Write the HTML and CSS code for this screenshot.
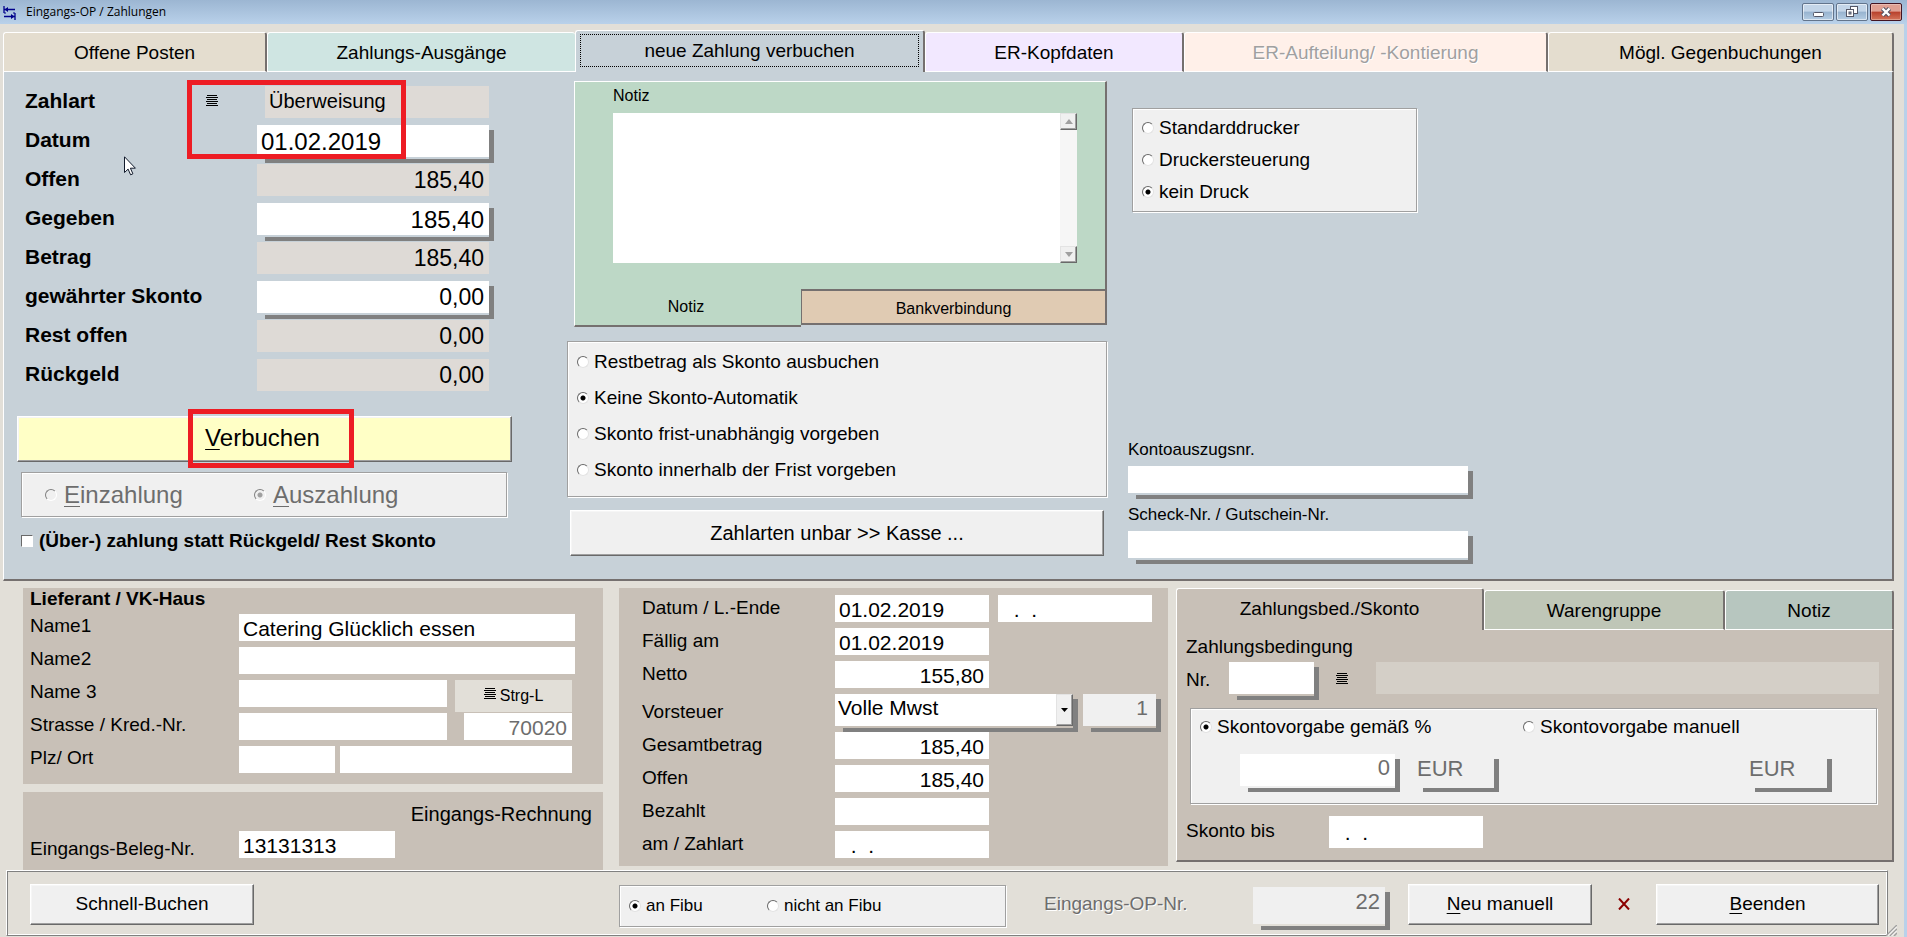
FILE: index.html
```html
<!DOCTYPE html>
<html lang="de">
<head>
<meta charset="utf-8">
<title>Eingangs-OP / Zahlungen</title>
<link rel="stylesheet" href="styles.css">
</head>
<body>
<header class="titlebar">
  <svg class="app-icon" viewBox="0 0 13 15" width="13" height="15" aria-hidden="true">
    <path d="M1 1v7M1.500 4.500h10.500M12 8v7M1 11.500h10.500" fill="none" stroke="#00008b" stroke-width="1.300"/>
    <path d="M1.500 4.500L5 2v5zM11.500 11.500L8 9v5z" fill="#00008b"/>
    <path d="M1 8h2M10 8h2" stroke="#00008b"/>
  </svg>
  <h1 class="titlebar-text">Eingangs-OP / Zahlungen</h1>
  <div class="window-buttons">
    <button class="winbtn" aria-label="Minimieren"><svg viewBox="0 0 30 16" width="30" height="16"><rect x="10.500" y="8.500" width="10" height="4" rx="1" fill="#fff" stroke="#535666"/></svg></button>
    <button class="winbtn" aria-label="Wiederherstellen"><svg viewBox="0 0 30 16" width="30" height="16"><g fill="#fff" stroke="#535666"><rect x="13.500" y="2.500" width="7" height="7"/><rect x="9.500" y="5.500" width="7" height="7"/><rect x="12" y="8" width="2" height="2" fill="#9fbbd6"/></g></svg></button>
    <button class="winbtn winbtn-close" aria-label="Schließen"><svg viewBox="0 0 30 16" width="30" height="16"><path d="M11.500 4.500l7 7M18.500 4.500l-7 7" stroke="#535666" stroke-width="4.500"/><path d="M11.500 4.500l7 7M18.500 4.500l-7 7" stroke="#fff" stroke-width="2.400"/></svg></button>
  </div>
</header>

<main class="window">
  <nav class="tabs main-tabs">
    <button class="tab tab-sand">Offene Posten</button>
    <button class="tab tab-mint">Zahlungs-Ausgänge</button>
    <button class="tab tab-active"><span class="focus-box">neue Zahlung verbuchen</span></button>
    <button class="tab tab-lilac">ER-Kopfdaten</button>
    <button class="tab tab-peach" disabled>ER-Aufteilung/ -Kontierung</button>
    <button class="tab tab-sand tab-last">Mögl. Gegenbuchungen</button>
  </nav>

  <section class="page">
    <div class="col-pay">
      <div class="pay-rows">
        <div class="pay-row">
          <div class="pay-label"><label for="zahlart">Zahlart</label>
            <button class="list-btn" aria-label="Zahlart wählen"><svg class="list-icon" viewBox="0 0 12 12" width="12" height="12" shape-rendering="crispEdges"><path d="M1 .5h10M0 2.500h12M1 4.500h10M0 6.500h12M1 8.500h10M0 10.500h12" stroke="#000"/></svg></button>
          </div>
          <div class="plain indent"><input id="zahlart" class="field tall grey" value="Überweisung" readonly></div>
        </div>
        <div class="pay-row"><label for="datum">Datum</label><div class="drop"><input id="datum" class="field tall big" value="01.02.2019"></div></div>
        <div class="pay-row"><label for="offen">Offen</label><div class="plain"><input id="offen" class="field tall grey num" value="185,40" readonly></div></div>
        <div class="pay-row"><label for="gegeben">Gegeben</label><div class="drop"><input id="gegeben" class="field tall big num" value="185,40"></div></div>
        <div class="pay-row"><label for="betrag">Betrag</label><div class="plain"><input id="betrag" class="field tall grey num" value="185,40" readonly></div></div>
        <div class="pay-row"><label for="skonto">gewährter Skonto</label><div class="drop"><input id="skonto" class="field tall num" value="0,00"></div></div>
        <div class="pay-row"><label for="rest">Rest offen</label><div class="plain"><input id="rest" class="field tall grey num" value="0,00" readonly></div></div>
        <div class="pay-row"><label for="rueck">Rückgeld</label><div class="plain"><input id="rueck" class="field tall grey num" value="0,00" readonly></div></div>
      </div>
      <button class="btn btn-book"><u>V</u>erbuchen</button>
      <div class="group direction" role="radiogroup" aria-label="Richtung">
        <label class="choice"><input type="radio" name="richtung" disabled><span><u>E</u>inzahlung</span></label>
        <label class="choice"><input type="radio" name="richtung" checked disabled><span><u>A</u>uszahlung</span></label>
      </div>
      <label class="check"><input type="checkbox"><span>(Über-) zahlung statt Rückgeld/ Rest Skonto</span></label>
      <div class="mark mark-type"></div>
      <div class="mark mark-book"></div>
      <svg class="pointer" viewBox="0 0 13 20" width="13" height="20" aria-hidden="true"><path d="M.5.8v15.700l3.600-3.400 2.500 5.700 2.300-1-2.500-5.600h5z" fill="#fff" stroke="#111a2b"/></svg>
    </div>

    <div class="col-mid">
      <div class="note">
        <div class="note-body">
          <label class="small" for="notiz">Notiz</label>
          <div class="note-edit">
            <textarea id="notiz"></textarea>
            <div class="scroll">
              <button aria-label="Nach oben"><svg viewBox="0 0 8 5" width="8" height="5"><path d="M0 5l4-5 4 5z" fill="#a0a0a0"/></svg></button>
              <button aria-label="Nach unten"><svg viewBox="0 0 8 5" width="8" height="5"><path d="M0 0l4 5 4-5z" fill="#a0a0a0"/></svg></button>
            </div>
          </div>
        </div>
        <div class="note-tabs">
          <button class="note-tab note-tab-active">Notiz</button>
          <button class="note-tab note-tab-bank">Bankverbindung</button>
        </div>
      </div>
      <div class="group skonto-mode" role="radiogroup" aria-label="Skonto">
        <label class="choice"><input type="radio" name="skontomodus"><span>Restbetrag als Skonto ausbuchen</span></label>
        <label class="choice"><input type="radio" name="skontomodus" checked><span>Keine Skonto-Automatik</span></label>
        <label class="choice"><input type="radio" name="skontomodus"><span>Skonto frist-unabhängig vorgeben</span></label>
        <label class="choice"><input type="radio" name="skontomodus"><span>Skonto innerhalb der Frist vorgeben</span></label>
      </div>
      <button class="btn btn-cash">Zahlarten unbar &gt;&gt; Kasse ...</button>
    </div>

    <div class="col-print">
      <div class="group printer" role="radiogroup" aria-label="Drucker">
        <label class="choice"><input type="radio" name="drucker"><span>Standarddrucker</span></label>
        <label class="choice"><input type="radio" name="drucker"><span>Druckersteuerung</span></label>
        <label class="choice"><input type="radio" name="drucker" checked><span>kein Druck</span></label>
      </div>
      <div class="refs">
        <label for="konto">Kontoauszugsnr.</label>
        <div class="drop"><input id="konto" class="field"></div>
        <label for="scheck">Scheck-Nr. / Gutschein-Nr.</label>
        <div class="drop"><input id="scheck" class="field"></div>
      </div>
    </div>
  </section>

  <section class="details">
    <div class="col-supplier">
      <div class="card supplier">
        <h2>Lieferant / VK-Haus</h2>
        <div class="form-row"><label for="name1">Name1</label><input id="name1" class="field" value="Catering Glücklich essen"></div>
        <div class="form-row"><label for="name2">Name2</label><input id="name2" class="field"></div>
        <div class="form-row"><label for="name3">Name 3</label>
          <div class="split split-list"><input id="name3" class="field">
            <button class="short-btn"><svg class="list-icon" viewBox="0 0 12 12" width="12" height="12" shape-rendering="crispEdges" aria-hidden="true"><path d="M1 .5h10M0 2.500h12M1 4.500h10M0 6.500h12M1 8.500h10M0 10.500h12" stroke="#000"/></svg>Strg-L</button></div></div>
        <div class="form-row"><label for="strasse">Strasse / Kred.-Nr.</label>
          <div class="split split-street"><input id="strasse" class="field"><input class="field num" aria-label="Kreditor-Nr." value="70020" disabled></div></div>
        <div class="form-row"><label for="plz">Plz/ Ort</label>
          <div class="split split-city"><input id="plz" class="field"><input class="field" aria-label="Ort"></div></div>
      </div>
      <div class="card receipt">
        <p class="doc-type">Eingangs-Rechnung</p>
        <div class="form-row"><label for="beleg">Eingangs-Beleg-Nr.</label><div class="split split-receipt"><input id="beleg" class="field" value="13131313"></div></div>
      </div>
    </div>

    <div class="card invoice">
      <div class="inv-row"><label for="idatum">Datum / L.-Ende</label><div class="halves"><input id="idatum" class="field" value="01.02.2019"><input class="field" aria-label="L.-Ende" value="  .  ."></div></div>
      <div class="inv-row"><label for="faellig">Fällig am</label><div class="halves"><input id="faellig" class="field" value="01.02.2019"></div></div>
      <div class="inv-row"><label for="netto">Netto</label><div class="halves"><input id="netto" class="field num" value="155,80"></div></div>
      <div class="inv-row inv-row-tax"><label for="vorsteuer">Vorsteuer</label>
        <div class="tax">
          <div class="drop"><div class="combo"><select id="vorsteuer" class="field tall"><option>Volle Mwst</option></select><span class="combo-arrow"><svg viewBox="0 0 7 4" width="7" height="4"><path d="M0 0h7L3.500 4z"/></svg></span></div></div>
          <div class="drop"><input class="field tall num pale" aria-label="Steuerschlüssel" value="1" disabled></div>
        </div></div>
      <div class="inv-row"><label for="gesamt">Gesamtbetrag</label><div class="halves"><input id="gesamt" class="field num" value="185,40"></div></div>
      <div class="inv-row"><label for="ioffen">Offen</label><div class="halves"><input id="ioffen" class="field num" value="185,40"></div></div>
      <div class="inv-row"><label for="bezahlt">Bezahlt</label><div class="halves"><input id="bezahlt" class="field"></div></div>
      <div class="inv-row"><label for="am">am / Zahlart</label><div class="halves"><input id="am" class="field" value="  .  ."></div></div>
    </div>

    <div class="terms">
      <nav class="tabs terms-tabs">
        <button class="tab tab-active">Zahlungsbed./Skonto</button>
        <button class="tab tab-sage">Warengruppe</button>
        <button class="tab tab-teal tab-last">Notiz</button>
      </nav>
      <div class="terms-body">
        <h3>Zahlungsbedingung</h3>
        <div class="terms-nr">
          <label for="zbnr">Nr.</label>
          <div class="drop"><input id="zbnr" class="field tall"></div>
          <button class="list-btn" aria-label="Zahlungsbedingung wählen"><svg class="list-icon" viewBox="0 0 12 12" width="12" height="12" shape-rendering="crispEdges"><path d="M1 .5h10M0 2.500h12M1 4.500h10M0 6.500h12M1 8.500h10M0 10.500h12" stroke="#000"/></svg></button>
          <input class="field tall stone" aria-label="Bezeichnung" readonly>
        </div>
        <div class="group discount" role="radiogroup" aria-label="Skontovorgabe">
          <label class="choice"><input type="radio" name="vorgabe" checked><span>Skontovorgabe gemäß %</span></label>
          <label class="choice"><input type="radio" name="vorgabe"><span>Skontovorgabe manuell</span></label>
          <div class="percent"><div class="drop"><input class="field tall num" aria-label="Skonto" value="0" disabled></div><div class="drop unit">EUR</div></div>
          <div class="manual"><div class="drop unit">EUR</div></div>
        </div>
        <div class="until"><label for="bis">Skonto bis</label><input id="bis" class="field tall" value="  .  ."></div>
      </div>
    </div>
  </section>

  <footer class="actions">
    <button class="btn act-quick">Schnell-Buchen</button>
    <div class="group fibu" role="radiogroup" aria-label="Fibu">
      <label class="choice"><input type="radio" name="fibu" checked><span>an Fibu</span></label>
      <label class="choice"><input type="radio" name="fibu"><span>nicht an Fibu</span></label>
    </div>
    <label class="op-label" for="opnr">Eingangs-OP-Nr.</label>
    <div class="drop op-field"><input id="opnr" class="field num pale" value="22" disabled></div>
    <button class="btn act-new"><u>N</u>eu manuell</button>
    <button class="cancel" aria-label="Abbrechen"><svg viewBox="0 0 12 12" width="12" height="12"><path d="M1 .5l10 11M11 .5L1 11.500" stroke="#8b0000" stroke-width="2"/></svg></button>
    <button class="btn act-end"><u>B</u>eenden</button>
  </footer>
  <svg class="grip" viewBox="0 0 11 11" width="11" height="11" aria-hidden="true"><path d="M0 11L11 0M4 11l7-7M8 11l3-3" stroke="#a0a0a0" stroke-width="1.500"/><path d="M1.500 11L11 1.500M5.500 11L11 5.500" stroke="#fff"/></svg>
</main>
</body>
</html>
```

FILE: styles.css
```css
* { box-sizing: border-box; }

body {
  margin: 0;
  min-height: 100vh;
  display: flex;
  flex-direction: column;
  background: #e2dfd8;
  color: #000;
  font: 19px/22px "Liberation Sans", Arial, sans-serif;
}

h1, h2, h3, p { margin: 0; font-size: inherit; font-weight: normal; }
h2 { font-weight: bold; }

button, input, select, textarea { font: inherit; color: inherit; margin: 0; border-radius: 0; }
button { padding: 0; border: 0; background: none; }
svg { display: block; }
u { text-decoration-thickness: 1px; text-underline-offset: 3px; }

/* Title bar */
.titlebar {
  height: 24px;
  flex: none;
  display: flex;
  align-items: center;
  padding: 0 5px 0 3px;
  background: linear-gradient(#9cb6d2, #b9d1ea);
}
.titlebar-text { margin-left: 10px; font: 12px/16px "Open Sans", "Noto Sans", sans-serif; }
.window-buttons { display: flex; gap: 2px; margin-left: auto; }
.winbtn {
  width: 32px;
  height: 18px;
  border: 1px solid #62748c;
  border-radius: 2px;
  background: linear-gradient(#c3d5e8 45%, #97b3cf 50%, #b5cde4);
  box-shadow: inset 0 0 0 1px rgba(255, 255, 255, .55);
}
.winbtn-close { border-color: #431422; background: linear-gradient(#e0a093 45%, #b8402c 50%, #d4745a); box-shadow: inset 0 0 0 1px rgba(255, 255, 255, .3); }

/* Window frame */
.window {
  position: relative;
  flex: 1;
  padding: 6px 10px 2px 3px;
  border-right: 3px solid #b9d1ea;
}

/* Tabs */
.tabs { display: grid; align-items: end; }
.main-tabs { grid-template-columns: 264fr 308fr 350fr 259fr 364fr 346fr; }
.terms-tabs { grid-template-columns: 308fr 241fr 169fr; }
.tab {
  height: 40px;
  padding-top: 2px;
  border: 1px solid #fff;
  border-right: 2px solid #75706f;
  border-radius: 3px 3px 0 0;
  text-align: center;
}
.tab:disabled { color: #a0a0a0; text-shadow: 1px 1px #fff; }
.tab-sand { background: #e4ddcf; }
.tab-mint { background: #cfe5e2; border-right: 0; }
.tab-lilac { background: #f2e8ff; }
.tab-peach { background: #fff0e9; }
.tab-sage { background: #bfc6b7; }
.tab-teal { background: #b7c6bf; }
.main-tabs .tab-active { height: 42px; padding: 3px 4px 5px; border-bottom: 0; background: #c7d1d8; }
.terms-tabs .tab-active { height: 42px; padding-bottom: 4px; border-bottom: 0; background: #c8c0b7; }
.focus-box { display: grid; place-items: center; height: 100%; border: 1px dotted #000; }

/* Main page */
.page {
  display: grid;
  grid-template-columns: 563fr 541fr 784fr;
  background: #c7d1d8;
  border: solid;
  border-width: 0 2px 2px 1px;
  border-color: #75706f #75706f #75706f #fff;
}
.col-pay { position: relative; display: flex; flex-direction: column; padding: 14px 55px 0 13px; }
.pay-rows { display: grid; gap: 7px; margin: 0 18px 25px 8px; font-size: 21px; }
.pay-row { display: grid; grid-template-columns: 232fr 237fr; align-items: start; height: 32px; line-height: 30px; font-weight: bold; }
.pay-label { display: flex; align-items: center; justify-content: space-between; padding-right: 39px; }
.list-btn { display: grid; place-items: center start; }

/* Fields */
.field {
  display: block;
  width: 100%;
  min-width: 0;
  height: 27px;
  padding: 2px 4px 0;
  border: 0;
  background: #fff;
  font-size: 21px;
}
.field:disabled { color: #6d6d6d; }
.tall { height: 32px; }
.num { padding-right: 5px; text-align: right; }
.grey { background: #dedad6; }
.pale { background: #f0f0f0; }
.stone { background: #d4cfc7; }
.pay-row .field { font-size: 23px; font-weight: normal; padding-top: 1px; }
.pay-row .indent .field { padding-bottom: 3px; font-size: 20px; }
.pay-row .big { font-size: 24px; }
.plain { padding-right: 5px; }
.indent { padding-left: 8px; }
.drop {
  padding: 0 5px 6px 0;
  background:
    linear-gradient(#808080, #808080) right bottom / calc(100% - 8px) 4px no-repeat,
    linear-gradient(#808080, #808080) right bottom / 5px calc(100% - 5px) no-repeat;
}

/* Buttons and groups */
.btn {
  height: 46px;
  border: 1px solid;
  border-color: #fff #696969 #696969 #fff;
  background: #f0f0f0;
  box-shadow: inset -1px -1px #a0a0a0, inset 1px 1px #f6f6f6;
}
.btn-book { background: #ffffc6; font-size: 24px; padding: 0 4px 3px 0; }
.group { background: #f0f0f0; border: 1px solid #a0a0a0; box-shadow: inset 1px 1px #fff, 1px 1px #fff; }
.choice { display: flex; align-items: center; gap: 5px; }
.choice input {
  appearance: none;
  flex: none;
  width: 12px;
  height: 12px;
  border: 1px solid;
  border-color: #696969 #e3e3e3 #e3e3e3 #696969;
  border-radius: 50%;
  background: #fff;
}
.choice input:checked { background: radial-gradient(circle, #000 2px, #fff 3px); }
.choice input:disabled { background: #f0f0f0; border-color: #808080 #fff #fff #808080; }
.choice input:disabled:checked { background: radial-gradient(circle, #a0a0a0 2px, #f0f0f0 3px); }
.direction {
  display: grid;
  grid-template-columns: 209fr 252fr;
  height: 45px;
  margin: 10px 5px 13px 4px;
  padding: 0 0 0 23px;
  color: #6d6d6d;
  font-size: 24px;
}
.direction .choice { gap: 7px; }
.check { display: flex; align-items: center; gap: 6px; margin-left: 4px; font-weight: bold; }
.check input {
  appearance: none;
  width: 12px;
  height: 12px;
  border: 1px solid;
  border-color: #696969 #fff #fff #696969;
  background: #fff;
}

/* Annotations on top of the form */
.mark { position: absolute; border: 5px solid #ed1c24; }
.mark-type { left: 183px; top: 8px; width: 219px; height: 79px; }
.mark-book { left: 184px; top: 337px; width: 166px; height: 59px; }
.pointer { position: absolute; left: 120px; top: 84px; }

/* Note block */
.col-mid { padding: 9px 0 23px; }
.note { margin: 0 1px 14px 7px; }
.note-body {
  padding: 3px 28px 26px 38px;
  border: solid;
  border-width: 1px 2px 0 1px;
  border-color: #fff #75706f #fff #fff;
  background: #bdd8c6;
}
.small { display: block; font-size: 16px; }
.note-edit { display: flex; height: 150px; margin-top: 6px; background: #fff; }
.note-edit textarea { flex: 1; min-width: 0; border: 0; resize: none; }
.scroll { width: 17px; display: flex; flex-direction: column; justify-content: space-between; background: #f6f6f6; }
.scroll button {
  display: grid;
  place-items: center;
  height: 17px;
  border: 1px solid;
  border-color: #e3e3e3 #696969 #696969 #e3e3e3;
  background: #f0f0f0;
  box-shadow: inset -1px -1px #a0a0a0;
}
.note-tabs { display: grid; grid-template-columns: 227fr 306fr; align-items: start; font-size: 16px; }
.note-tab-active { height: 38px; padding-right: 4px; border: solid; border-width: 0 0 2px 1px; border-color: #75706f #75706f #75706f #fff; background: #bdd8c6; }
.note-tab-bank { height: 36px; padding-top: 4px; border: 2px solid #75706f; border-left-width: 1px; background: #e0cbb3; }
.skonto-mode { display: grid; gap: 14px; margin-right: 1px; padding: 9px 9px 15px; }
.btn-cash { display: block; width: calc(100% - 7px); margin: 13px 4px 0 3px; font-size: 20px; }

/* Printer and references */
.col-print { display: flex; flex-direction: column; justify-content: space-between; padding: 36px 0 15px 20px; }
.printer { display: grid; gap: 10px; width: 100%; max-width: 285px; margin-left: 4px; padding: 8px 9px; }
.refs { display: grid; gap: 5px; width: 100%; max-width: 345px; font-size: 17px; }

/* Details */
.details { display: grid; grid-template-columns: 580fr 557fr 718fr; column-gap: 8px; align-items: start; margin: 7px 0 0 20px; }
.card { background: #c8c0b7; }
.col-supplier { display: grid; gap: 8px; }
.supplier { display: grid; gap: 6px; padding: 0 28px 11px 7px; }
.supplier h2 { height: 20px; }
.form-row { display: grid; grid-template-columns: 209fr 336fr; height: 27px; }
.form-row label { line-height: 24px; }
.split { display: grid; align-items: start; }
.split-list { grid-template-columns: 208fr 117fr; gap: 8px; padding-right: 3px; }
.split-street { grid-template-columns: 208fr 108fr; gap: 17px; padding-right: 3px; }
.split-city { grid-template-columns: 96fr 232fr; gap: 5px; padding-right: 3px; }
.split-receipt { grid-template-columns: 156fr 180fr; }
.short-btn { display: flex; align-items: center; justify-content: center; gap: 4px; height: 32px; background: #e2dfd8; font-size: 16px; }
.short-btn .list-icon { margin-bottom: 4px; }
.receipt { padding: 10px 28px 12px 7px; }
.doc-type { margin: 0 -17px 5px 0; line-height: 24px; font-size: 20px; text-align: right; }
.receipt .form-row label { line-height: 36px; }

.invoice { display: grid; gap: 6px; margin-left: 8px; padding: 7px 7px 8px 23px; }
.inv-row { display: grid; grid-template-columns: 193fr 326fr; align-items: start; }
.inv-row label { line-height: 26px; }
.inv-row-tax { height: 32px; }
.inv-row-tax label { line-height: 36px; }
.halves { display: grid; grid-template-columns: 1fr 1fr; gap: 9px; padding-right: 9px; }
.tax { display: grid; grid-template-columns: 243fr 78fr; gap: 5px; }
.tax .num { padding: 0 8px 4px; }
.combo { position: relative; }
.combo select { appearance: none; padding: 0 20px 4px 3px; }
.combo-arrow {
  position: absolute;
  inset: 0 0 0 auto;
  width: 17px;
  display: grid;
  place-items: center;
  border: 1px solid;
  border-color: #e3e3e3 #696969 #696969 #e3e3e3;
  background: #f0f0f0;
  box-shadow: inset -1px -1px #a0a0a0;
  pointer-events: none;
}

.terms-body {
  padding: 6px 13px 12px 9px;
  border: solid;
  border-width: 0 2px 2px 1px;
  border-color: #75706f #75706f #75706f #fff;
  background: #c8c0b7;
}
.terms-nr { display: grid; grid-template-columns: 43fr 90fr 17fr 40fr 503fr; height: 32px; margin: 4px 0 14px; }
.terms-nr label { line-height: 36px; }
.terms-nr .drop { align-self: start; }
.terms-nr .list-btn { grid-column: 4; padding-bottom: 4px; }
.discount { display: grid; grid-template-columns: 323fr 353fr; row-gap: 16px; margin: 0 2px 12px 4px; padding: 7px 0 11px 9px; }
.discount .field, .unit { font-size: 22px; }
.discount .field { padding: 0 5px 4px; }
.percent { display: grid; grid-template-columns: 160fr 84fr; column-gap: 15px; padding: 0 24px 0 40px; }
.manual { display: grid; grid-template-columns: 224fr 85fr 44fr; }
.manual .unit { grid-column: 2; }
.unit { padding: 2px 0 11px 2px; line-height: 25px; color: #6d6d6d; }
.until { display: grid; grid-template-columns: 143fr 154fr 396fr; line-height: 30px; }

/* Action bar */
.actions {
  display: grid;
  grid-template-columns: 224fr 365fr 387fr 38fr 209fr 137fr 18fr 184fr 64fr 223fr;
  align-items: center;
  height: 66px;
  margin: 0 6px 0 3px;
  padding: 2px 8px 0 23px;
  border: 1px solid;
  border-color: #fff #808080 #808080 #fff;
  box-shadow: inset 1px 1px #808080, inset -1px -1px #fff;
}
.actions .btn { height: 41px; }
.fibu { grid-column: 3; display: grid; grid-template-columns: 138fr 238fr; height: 42px; margin-top: 4px; padding-left: 9px; font-size: 17px; }
.op-label { grid-column: 5; color: #6d6d6d; text-shadow: 1px 1px #fff; }
.op-field { grid-column: 6; margin-top: 8px; }
.op-field .field { height: 37px; padding: 0 5px 6px; font-size: 22px; }
.act-new { grid-column: 8; }
.cancel { display: grid; place-items: center; }
.grip { position: absolute; right: 7px; bottom: 2px; }
```
